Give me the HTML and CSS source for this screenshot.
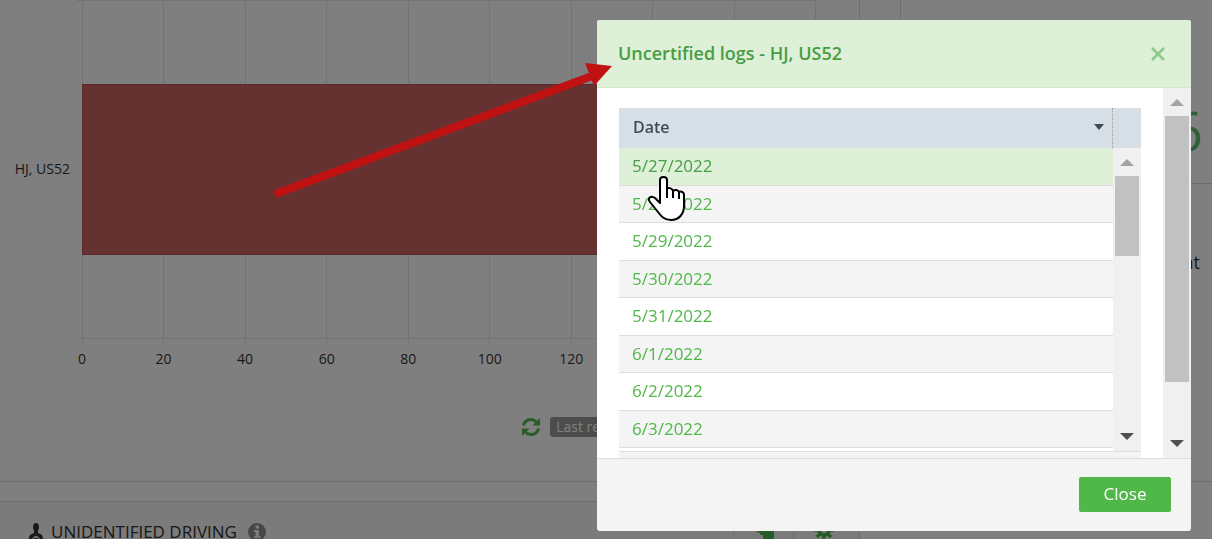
FILE: index.html
```html
<!DOCTYPE html>
<html lang="en">
<head>
    <meta charset="UTF-8">
    <meta name="viewport" content="width=device-width, initial-scale=1.0">
    <title>Uncertified logs</title>
    <link rel="stylesheet" href="styles.css">
</head>
<body>
    <div class="dashboard">
        <div class="panel">
            <div class="chart">
                <div class="chart-label">HJ, US52</div>
                <div class="plot">
                    <div class="plot-grid">
                        <i></i><i></i><i></i><i></i><i></i><i></i><i></i><i></i><i></i>
                    </div>
                    <div class="bar" style="width: 95%"></div>
                </div>
            </div>
            <div class="axis">
                <span>0</span><span>20</span><span>40</span><span>60</span><span>80</span><span>100</span><span>120</span><span></span><span></span>
            </div>
            <div class="refresh">
                <svg width="20" height="20" viewBox="0 0 20 20">
                    <path d="M2.5 8.5A7.5 7.5 0 0 1 15.5 5M17.5 11.5A7.5 7.5 0 0 1 4.500 15" fill="none" stroke="#4fb848" stroke-width="3"/>
                    <path d="M19 1v7.500h-7.500zM1 19v-7.500h7.500z" fill="#4fb848"/>
                </svg>
                <span class="tag">Last refresh</span>
            </div>
        </div>
        <div class="panel side">
            <div class="score">6</div>
            <div class="score-label">Percent</div>
        </div>
        <div class="panel driving">
            <div class="driving-title">
                <svg width="16" height="18" viewBox="0 0 16 18" fill="#333">
                    <ellipse cx="8" cy="4" rx="3" ry="4"/>
                    <path d="M6 7h4v4H6zM1 16c0-4 2-5 5-6l2 1.500L10 10c3 1 5 2 5 6l-3 1c0-2-2-4-4-4s-4 2-4 4z"/>
                    <path d="M4 18c1-3 7-3 8 0" fill="none" stroke="#333" stroke-width="1.500"/>
                </svg>
                <h2>UNIDENTIFIED DRIVING</h2>
                <svg width="18" height="18" viewBox="0 0 18 18">
                    <circle cx="9" cy="9" r="9" fill="#8f8f8f"/>
                    <path d="M7.500 2.500h3.500v3H7.500zM6 7h5v6h1.500v2H6v-2h1.500V9H6z" fill="#f6f6f6"/>
                </svg>
            </div>
            <button class="tool" aria-label="Announcements">
                <svg width="20" height="20" viewBox="0 0 20 20" fill="#4fb848"><path d="M8 2h12v18H9v-5H6v-2l-4-1 4-2h2z"/></svg>
            </button>
            <button class="tool" aria-label="Settings">
                <svg width="20" height="20" viewBox="0 0 20 20">
                    <circle cx="10" cy="10" r="5" fill="none" stroke="#4fb848" stroke-width="4"/>
                    <circle cx="10" cy="10" r="8" fill="none" stroke="#4fb848" stroke-width="4" stroke-dasharray="3.140 3.140" transform="rotate(-11 10 10)"/>
                </svg>
            </button>
        </div>
    </div>

    <div class="overlay">
        <div class="modal" role="dialog" aria-labelledby="modal-title">
            <div class="modal-header">
                <h1 id="modal-title">Uncertified logs - HJ, US52</h1>
                <button class="dismiss" aria-label="Dismiss">
                    <svg width="14" height="14" viewBox="0 0 14 14"><path d="M1 1l12 12M13 1L1 13" stroke="#8cc98a" stroke-width="2.500"/></svg>
                </button>
            </div>
            <div class="modal-body">
                <div class="grid">
                    <table>
                        <thead>
                            <tr><th><div class="th">Date <span class="caret"></span></div></th></tr>
                        </thead>
                        <tbody>
                            <tr class="hover"><td><a href="#">5/27/2022</a></td></tr>
                            <tr><td><a href="#">5/28/2022</a></td></tr>
                            <tr><td><a href="#">5/29/2022</a></td></tr>
                            <tr><td><a href="#">5/30/2022</a></td></tr>
                            <tr><td><a href="#">5/31/2022</a></td></tr>
                            <tr><td><a href="#">6/1/2022</a></td></tr>
                            <tr><td><a href="#">6/2/2022</a></td></tr>
                            <tr><td><a href="#">6/3/2022</a></td></tr>
                        </tbody>
                    </table>
                    <div class="grid-side">
                        <div class="scrollbar">
                            <span class="up"></span>
                            <span class="thumb"></span>
                            <span class="down"></span>
                        </div>
                    </div>
                    <div class="grid-footer"></div>
                </div>
                <div class="scrollbar outer">
                    <span class="up"></span>
                    <span class="thumb"></span>
                    <span class="down"></span>
                </div>
            </div>
            <div class="modal-footer">
                <button class="button">Close</button>
            </div>
        </div>
    </div>

    <!-- arrow and pointer over the dialog -->
    <svg class="arrow" width="340" height="140" viewBox="0 0 340 140">
        <path d="M6 131L320 14" stroke="#c01212" stroke-width="8" stroke-linecap="round"/>
        <path d="M340 4L313 1L322 24z" fill="#c01212"/>
    </svg>
    <svg class="pointer" width="40" height="46" viewBox="0 0 40 46">
        <path d="M13 28V5c0-4 7-4 7 0v9c1-2 5-1 6 2 2-2 5-1 6 1 2-1 5 0 5 3v11c0 8-5 14-13 14-7 0-10-4-13-8L3 27c-3-4 1-7 5-4z" fill="#fff" stroke="#000" stroke-width="2" stroke-linejoin="round"/>
        <path d="M20 14v9M26 16v7M32 17v7" stroke="#000" stroke-width="2"/>
    </svg>
</body>
</html>
```
FILE: styles.css
```css
* {
    margin: 0;
    padding: 0;
    box-sizing: border-box;
}

body {
    height: 100vh;
    overflow: hidden;
    background: #fff;
    color: #333;
    font: 14px/20px "Open Sans", sans-serif;
}

button {
    border: 0;
    background: none;
    font-family: inherit;
    cursor: pointer;
}

svg {
    display: block;
    flex: none;
}

/* dashboard */
.dashboard {
    display: grid;
    grid-template-columns: minmax(0, 1fr) 312px;
    gap: 19px 40px;
}

.panel {
    border-right: 1px solid #ddd;
    border-bottom: 1px solid #ddd;
}

.chart {
    display: flex;
    align-items: center;
    padding-right: 43px;
}

.chart-label {
    width: 77px;
    padding: 0 7px 2px 0;
    text-align: right;
}

.plot {
    position: relative;
    display: flex;
    align-items: center;
    flex: 1;
    height: 339px;
    padding-left: 5px;
    border-top: 1px solid #e6e6e6;
    border-bottom: 1px solid #e6e6e6;
}

.plot-grid {
    position: absolute;
    top: 0;
    right: 0;
    bottom: -6px;
    left: 5px;
    display: flex;
    border-right: 1px solid #e6e6e6;
}

.plot-grid i {
    flex: 1;
    border-left: 1px solid #e6e6e6;
}

.bar {
    position: relative;
    height: 171px;
    background: #ca6462;
    border: 1px solid #b55;
}

.axis {
    display: flex;
    padding: 10px 43px 0 82px;
}

.axis span {
    display: flex;
    justify-content: center;
    flex: 1;
    transform: translateX(-50%);
}

.refresh {
    display: flex;
    align-items: center;
    justify-content: center;
    gap: 9px;
    padding: 48px 0 44px;
    margin-left: 302px;
}

.tag {
    padding: 0 6px;
    border-radius: 3px;
    background: #999;
    color: #fff;
}

.side {
    border-right: 0;
    border-left: 1px solid #ddd;
    text-align: right;
    padding-right: 12px;
}

.score {
    margin-right: -12px;
    padding: 90px 9px 12px;
    border-bottom: 1px solid #ddd;
    color: #5cc274;
    font-size: 54px;
    line-height: 81px;
}

.score-label {
    padding-top: 66px;
    font-size: 18px;
    line-height: 24px;
}

.driving {
    display: flex;
    height: 62px;
    padding-right: 6px;
    background: #f6f6f6;
    border-top: 1px solid #ddd;
}

.driving-title {
    display: flex;
    align-items: center;
    flex: 1;
    gap: 7px;
    padding-left: 28px;
}

.driving-title h2 {
    margin-right: 4px;
    font-size: 17px;
    font-weight: 400;
}

.tool {
    display: flex;
    justify-content: center;
    width: 60px;
    padding-top: 18px;
    border-left: 1px solid #ddd;
}

/* modal */
.overlay {
    position: fixed;
    inset: 0;
    padding: 20px 21px;
    background: rgba(0, 0, 0, .5);
}

.modal {
    width: 100%;
    max-width: 594px;
    margin-left: auto;
    border-radius: 3px;
    background: #f4f4f4;
    overflow: hidden;
}

.modal-header {
    display: flex;
    align-items: center;
    justify-content: space-between;
    padding: 21px 26px 21px 21px;
    border-bottom: 1px solid #d6e9c6;
    background: #def0d8;
    color: #489d44;
}

.modal-header h1 {
    font-size: 18px;
    font-weight: 600;
    line-height: 25px;
}

.modal-body {
    display: flex;
    height: 370px;
    background: #fff;
}

.grid {
    display: flex;
    flex-wrap: wrap;
    flex: 1;
    padding: 20px 22px 0;
    align-content: flex-start;
}

table {
    flex: 1;
    height: 340px;
    border-collapse: separate;
    border-spacing: 0;
    font-size: 17px;
    line-height: 24px;
    text-align: left;
}

th {
    height: 40px;
    padding: 0 8px 2px 14px;
    border-right: 1px dotted #999;
    background: #d7dfe6;
    color: #3f4a57;
    font-size: 16px;
    font-weight: 600;
}

.th {
    display: flex;
    align-items: center;
    justify-content: space-between;
}

.caret {
    border: 5px solid transparent;
    border-top: 6px solid #3f4a57;
    border-bottom: 0;
}

td {
    padding: 0 13px;
    border-bottom: 1px solid #ddd;
}

tbody tr:nth-child(even) {
    background: #f4f4f4;
}

tbody .hover {
    background: #def0d8;
}

a {
    color: #4fb848;
    text-decoration: none;
}

.hover a {
    color: #489d44;
}

.grid-side {
    width: 28px;
    padding-top: 40px;
    background: #d7dfe6;
}

.grid-footer {
    width: 100%;
    height: 7px;
    border-top: 1px solid #ddd;
    background: #f4f4f4;
}

.scrollbar {
    display: flex;
    flex-direction: column;
    align-items: center;
    width: 28px;
    height: 303px;
    padding: 11px 0;
    background: #f0f0f0;
}

.scrollbar .up {
    border: 7px solid transparent;
    border-top: 0;
    border-bottom-color: #a3a3a3;
}

.scrollbar .down {
    margin-top: auto;
    border: 7px solid transparent;
    border-bottom: 0;
    border-top-color: #505050;
}

.thumb {
    width: 24px;
    height: 80px;
    margin-top: 10px;
    background: #c1c1c1;
}

.outer {
    height: 100%;
}

.outer .thumb {
    height: 266px;
}

.modal-footer {
    display: flex;
    justify-content: flex-end;
    padding: 18px 20px 19px;
    border-top: 1px solid #ddd;
}

.button {
    width: 92px;
    height: 35px;
    padding-bottom: 2px;
    border-radius: 2px;
    background: #4fb848;
    color: #fff;
    font-size: 17px;
    line-height: 24px;
}

.arrow {
    position: absolute;
    top: 62px;
    left: 272px;
}

.pointer {
    position: absolute;
    top: 175px;
    left: 647px;
}
```
